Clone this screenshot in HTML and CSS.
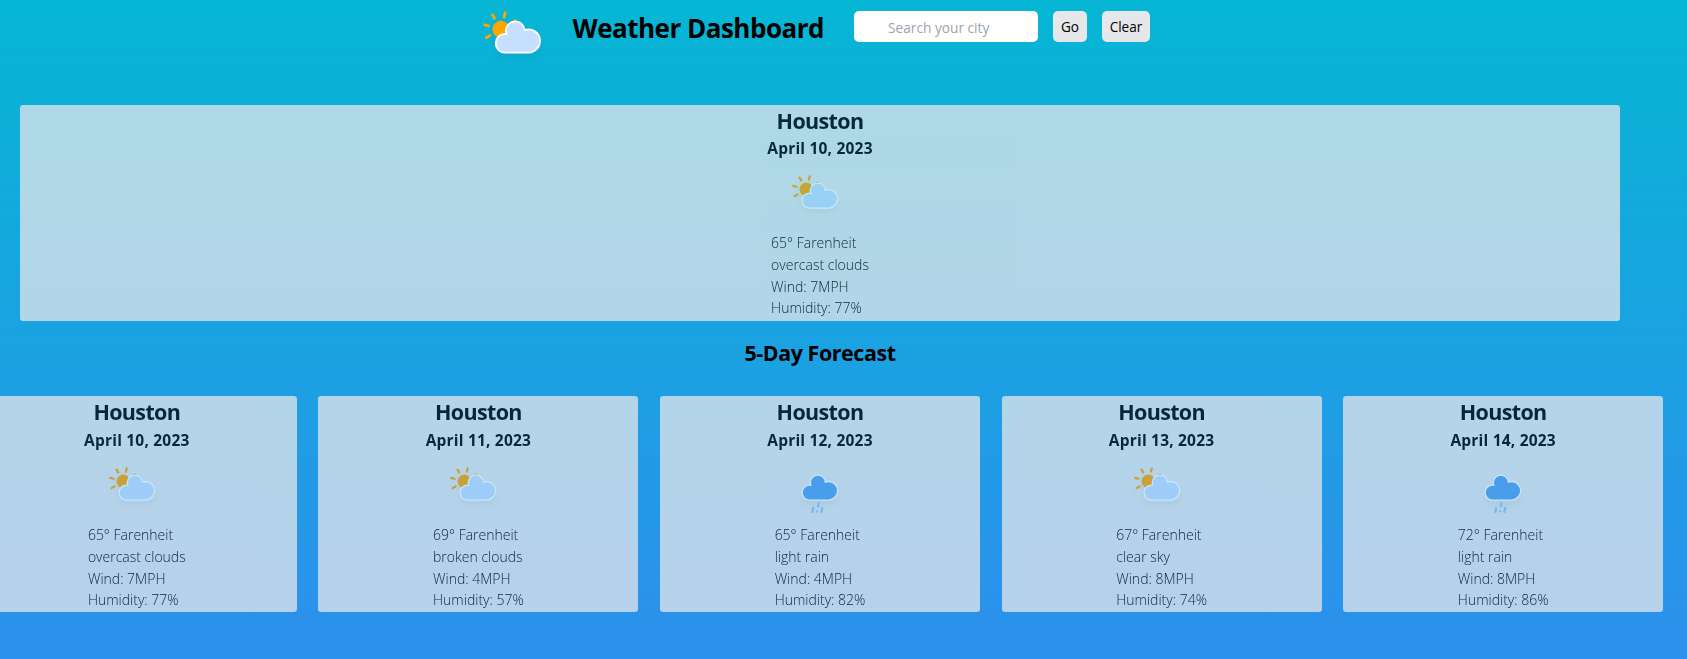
FILE: index.html
```html
<!DOCTYPE html>
<html lang="en">
<head>
<meta charset="utf-8">
<title>Weather Dashboard</title>
<link rel="stylesheet" href="styles.css">
</head>
<body>
<svg class="defs" width="0" height="0" aria-hidden="true">
  <defs>
    <filter id="blur" x="-25%" y="-25%" width="150%" height="175%">
      <feGaussianBlur in="SourceAlpha" stdDeviation="3"/>
      <feOffset dx="0" dy="4" result="offsetblur"/>
      <feComponentTransfer><feFuncA type="linear" slope="0.05"/></feComponentTransfer>
      <feMerge><feMergeNode/><feMergeNode in="SourceGraphic"/></feMerge>
    </filter>
    <path id="cloud" d="M47.7 35.4c0-4.6-3.7-8.2-8.2-8.2-1 0-1.9.2-2.8.5-.3-3.4-3.1-6.2-6.6-6.2-3.7 0-6.7 3-6.7 6.7 0 .8.2 1.6.4 2.3-.3-.1-.7-.1-1-.1-3.7 0-6.7 3-6.7 6.7 0 3.6 2.9 6.6 6.5 6.7h17.2c4.4-.5 7.9-4 7.9-8.4z" transform="translate(0 -1)" stroke="#fff" stroke-width="1.2"/>
    <line id="ray" y1="9" y2="12" stroke="orange" stroke-width="2" stroke-linecap="round"/>
  </defs>
  <symbol id="cloudy" viewBox="0 0 64 64">
    <g filter="url(#blur)">
      <g transform="translate(19.8 26.1) rotate(15)">
        <use href="#ray"/>
        <use href="#ray" transform="rotate(45)"/>
        <use href="#ray" transform="rotate(90)"/>
        <use href="#ray" transform="rotate(135)"/>
        <use href="#ray" transform="rotate(180)"/>
        <use href="#ray" transform="rotate(225)"/>
        <use href="#ray" transform="rotate(270)"/>
        <use href="#ray" transform="rotate(315)"/>
        <circle r="5" fill="orange" stroke="orange" stroke-width="2"/>
      </g>
      <use href="#cloud" fill="#c6deff"/>
    </g>
  </symbol>
  <symbol id="rainy" viewBox="0 0 64 64">
    <g filter="url(#blur)">
      <use href="#cloud" fill="#57a0ee"/>
      <path d="M25.9 49.6l-.7 3.6M30.7 45.6l-.5 2.7M29.5 52.7v.01M34 49.6l-.7 3.6" fill="none" stroke="#91c0f8" stroke-width="2" stroke-linecap="round"/>
    </g>
  </symbol>
</svg>

<main class="page">
  <header class="header">
    <svg class="logo" viewBox="0 5.3 64 58.7"><use href="#cloudy" width="64" height="64"/></svg>
    <h1 class="title">Weather Dashboard</h1>
    <input class="search" type="text" placeholder="Search your city">
    <button class="button button-go">Go</button>
    <button class="button button-clear">Clear</button>
  </header>

  <section class="card today">
    <h2 class="city">Houston</h2>
    <h3 class="date">April 10, 2023</h3>
    <svg class="icon"><use href="#cloudy"/></svg>
    <ul class="details"><li>65° Farenheit</li><li>overcast clouds</li><li>Wind: 7MPH</li><li>Humidity: 77%</li></ul>
  </section>

  <h2 class="forecast-title">5-Day Forecast</h2>

  <section class="forecast">
    <article class="card">
      <h2 class="city">Houston</h2>
      <h3 class="date">April 10, 2023</h3>
      <svg class="icon"><use href="#cloudy"/></svg>
      <ul class="details"><li>65° Farenheit</li><li>overcast clouds</li><li>Wind: 7MPH</li><li>Humidity: 77%</li></ul>
    </article>
    <article class="card">
      <h2 class="city">Houston</h2>
      <h3 class="date">April 11, 2023</h3>
      <svg class="icon"><use href="#cloudy"/></svg>
      <ul class="details"><li>69° Farenheit</li><li>broken clouds</li><li>Wind: 4MPH</li><li>Humidity: 57%</li></ul>
    </article>
    <article class="card">
      <h2 class="city">Houston</h2>
      <h3 class="date">April 12, 2023</h3>
      <svg class="icon"><use href="#rainy"/></svg>
      <ul class="details"><li>65° Farenheit</li><li>light rain</li><li>Wind: 4MPH</li><li>Humidity: 82%</li></ul>
    </article>
    <article class="card">
      <h2 class="city">Houston</h2>
      <h3 class="date">April 13, 2023</h3>
      <svg class="icon"><use href="#cloudy"/></svg>
      <ul class="details"><li>67° Farenheit</li><li>clear sky</li><li>Wind: 8MPH</li><li>Humidity: 74%</li></ul>
    </article>
    <article class="card">
      <h2 class="city">Houston</h2>
      <h3 class="date">April 14, 2023</h3>
      <svg class="icon"><use href="#rainy"/></svg>
      <ul class="details"><li>72° Farenheit</li><li>light rain</li><li>Wind: 8MPH</li><li>Humidity: 86%</li></ul>
    </article>
  </section>
</main>
</body>
</html>
```

FILE: styles.css
```css
* { box-sizing: border-box; margin: 0; padding: 0; }

body {
  height: 659px;
  overflow: hidden;
  background: linear-gradient(#06b6d4, #3b82f6) 0 0 / 100% 890px no-repeat;
  font-family: "Open Sans", "Noto Sans", sans-serif;
  color: #000;
}

.defs { position: absolute; }

.page {
  display: flex;
  flex-direction: column;
  align-items: center;
  width: 1640px;
}

.header {
  display: flex;
  align-items: flex-start;
  align-self: flex-start;
  height: 105px;
  padding-left: 472.5px;
}

.logo { width: 90px; height: 82.5px; margin-right: 10px; }

.title {
  width: 251.5px;
  margin: 10px 30px 0 0;
  font-size: 26px;
  line-height: 37px;
  font-weight: 700;
  letter-spacing: -0.5px;
  white-space: nowrap;
}

.search {
  width: 184px;
  height: 31px;
  margin: 11px 15px 0 0;
  padding: 2px 34px 0;
  border: 0;
  border-radius: 5px;
  background: #fff;
  font: 13.7px "Open Sans", sans-serif;
}

.search::placeholder { color: #9ca3af; }

.button {
  height: 31px;
  margin-top: 11px;
  border: 0;
  border-radius: 5px;
  background: #e5e7eb;
  color: #000;
  font: 13.6px "Open Sans", sans-serif;
}

.button-go { width: 34px; margin-right: 15px; }
.button-clear { width: 48px; }

.card {
  display: flex;
  flex: none;
  flex-direction: column;
  align-items: center;
  width: 320px;
  height: 216px;
  border-radius: 3px;
  background: #e5e7eb;
  opacity: 0.75;
}

.city { font-size: 21.5px; line-height: 32px; font-weight: 700; letter-spacing: -0.65px; }
.date { font-size: 15.5px; line-height: 24px; font-weight: 700; letter-spacing: 0.2px; }
.icon { width: 72px; height: 72px; flex: none; }

.details {
  list-style: none;
  font-size: 14px;
  line-height: 21.8px;
  font-weight: 300;
}

.today { width: 1600px; }
.today .city { line-height: 31px; }

.forecast-title {
  margin: 16px 0 27px;
  font-size: 21.4px;
  line-height: 32px;
  font-weight: 700;
  letter-spacing: -0.4px;
}

.forecast {
  display: flex;
  justify-content: center;
  gap: 21.6px;
}
```
